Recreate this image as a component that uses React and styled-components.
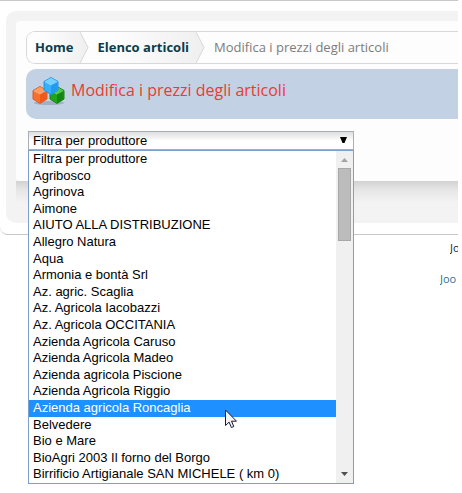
import React, { useState } from "react";
import styled, { createGlobalStyle } from "styled-components";

const GlobalStyle = createGlobalStyle`
  * { box-sizing: border-box; }
  body { margin: 0; background: #fff; font-family: "Open Sans", sans-serif; }
`;

const Page = styled.div`
  padding-right: 4px;
  min-height: 100vh;
`;

const Frame = styled.main`
  padding: 10px 0 11px 6px;
  border: 1px solid #c8c8c8;
  border-width: 1px 0;
  border-bottom-left-radius: 8px;
`;

const Surround = styled.div`
  padding: 10px 0 0 10px;
  background: #f3f3f3;
  border-radius: 10px 0 0 10px;
`;

const Panel = styled.section`
  padding: 10px 0 31px 10px;
  background: #fdfdfd;
  border-radius: 4px 0 0 4px;
`;

const PanelShade = styled.div`
  height: 42px;
  background: linear-gradient(#d2d2d2, #e6e6e6 9px, #f3f3f3 22px);
`;

const Breadcrumbs = styled.nav`
  display: flex;
  height: 33px;
  border: 1px solid #d8d8d8;
  border-right: 0;
  border-radius: 9px 0 0 9px;
  overflow: hidden;
  font-size: 13px;
  line-height: 31px;
  white-space: nowrap;
`;

const Crumb = styled.a`
  display: flex;
  padding-left: 8px;
  gap: 7px;
  color: #0b3c4c;
  font-weight: 700;
  text-decoration: none;
  background: linear-gradient(90deg, #fdfdfd 20%, #efefef);
`;

const CurrentCrumb = styled.span`
  padding-left: 9px;
  color: #7c7c7c;
`;

const Banner = styled.header`
  display: flex;
  gap: 5px;
  height: 50px;
  margin-top: 5px;
  padding: 8px 6px;
  background: #c3d1e5;
  border-radius: 10px 0 0 10px;
`;

const Title = styled.h1`
  margin: 0;
  font-size: 16px;
  line-height: 26px;
  font-weight: 400;
  color: #f0392f;
`;

const Filter = styled.div`
  position: relative;
  width: 326px;
  margin: 12px 0 0 2px;
  font-family: "Liberation Sans", Arial, sans-serif;
  font-size: 13px;
  color: #000;
`;

const SelectBox = styled.div`
  display: grid;
  align-items: center;
  height: 19px;
  border: 1px solid #a5b0bb;
  background: linear-gradient(#dedede, #fff 9px);
`;

const Select = styled.select`
  grid-area: 1 / 1;
  width: 100%;
  height: 17px;
  padding: 0 4px;
  border: 0;
  outline: 0;
  appearance: none;
  background: transparent;
  color: inherit;
  font: inherit;
`;

const SelectArrow = styled.svg`
  grid-area: 1 / 1;
  justify-self: end;
  margin: 0 6px 2px 0;
  pointer-events: none;
`;

const Menu = styled.div`
  position: absolute;
  z-index: 1;
  top: 100%;
  left: 0;
  width: 100%;
  height: 334px;
  display: grid;
  grid-template-columns: 1fr 17px;
  border: 1px solid #7a9fd0;
  background: #fff;
`;

const Options = styled.ul`
  display: grid;
  grid-template-rows: repeat(20, 1fr);
  margin: 0;
  padding: 0;
  list-style: none;
`;

const Option = styled.li`
  padding-left: 4px;
  line-height: 16px;
  white-space: nowrap;
  background: ${(p) => (p.$active ? "#1e90ff" : "transparent")};
  color: ${(p) => (p.$active ? "#fff" : "#000")};
`;

const Scrollbar = styled.div`
  display: flex;
  flex-direction: column;
  align-items: center;
  background: #f0f0f0;
`;

const Thumb = styled.div`
  width: 13px;
  height: 73px;
  margin-bottom: auto;
  border: 1px solid #a8a8a8;
  background: #bcbcbc;
`;

const Pointer = styled.svg`
  position: absolute;
  z-index: 2;
  left: 197px;
  top: 278px;
  pointer-events: none;
`;

const Footer = styled.footer`
  display: flex;
  flex-direction: column;
  align-items: flex-end;
  gap: 14px;
  padding-top: 4px;
  font-size: 11px;
  line-height: 17px;
`;

const Credit = styled.span`
  width: 8px;
  overflow: hidden;
  color: #252525;
`;

const CreditLink = styled.a`
  width: 18px;
  overflow: hidden;
  color: #2f6f96;
  text-decoration: none;
`;

const producers = [
  "Filtra per produttore",
  "Agribosco",
  "Agrinova",
  "Aimone",
  "AIUTO ALLA DISTRIBUZIONE",
  "Allegro Natura",
  "Aqua",
  "Armonia e bontà Srl",
  "Az. agric. Scaglia",
  "Az. Agricola Iacobazzi",
  "Az. Agricola OCCITANIA",
  "Azienda Agricola Caruso",
  "Azienda Agricola Madeo",
  "Azienda agricola Piscione",
  "Azienda Agricola Riggio",
  "Azienda agricola Roncaglia",
  "Belvedere",
  "Bio e Mare",
  "BioAgri 2003 Il forno del Borgo",
  "Birrificio Artigianale SAN MICHELE ( km 0)",
];

function CrumbLink({ children }) {
  return (
    <Crumb href="#">
      <span>{children}</span>
      <svg width="9" height="31" viewBox="0 0 9 31" aria-hidden="true">
        <path d="M0 0 8 15.5 0 31H9V0Z" fill="#fdfdfd" />
        <path d="M0 0 8 15.5 0 31" fill="none" stroke="#d8d8d8" />
      </svg>
    </Crumb>
  );
}

function Cube({ x, y, top, left, right, edge }) {
  return (
    <g transform={`translate(${x} ${y})`}>
      <path d="M1 4.5 8 .5l7 4v8.5L8 17.5 1 13Z" fill={left} stroke={edge} strokeLinejoin="round" />
      <path d="M1.5 4.5 8 .8 14.5 4.5 8 8Z" fill={top} />
      <path d="M8 8l6.5-3.5V13L8 17Z" fill={right} />
      <path d="M2 5 8 8l6-3" fill="none" stroke="#fff" strokeOpacity=".3" />
    </g>
  );
}

function CubesIcon() {
  return (
    <svg width="34" height="30" viewBox="0 0 34 30" aria-hidden="true">
      <ellipse cx="17" cy="26" rx="15" ry="2" fill="#61708a" opacity=".35" />
      <Cube x={17} y={9} top="#50c943" left="#20a51c" right="#118910" edge="#168318" />
      <Cube x={0} y={9} top="#ff9b65" left="#fb6f2c" right="#ef581b" edge="#d85b28" />
      <Cube x={11} y={0} top="#78d0ff" left="#36b0fd" right="#219bf2" edge="#2094e6" />
    </svg>
  );
}

export default function App() {
  const [value, setValue] = useState(producers[0]);
  const [active, setActive] = useState(15);
  return (
    <>
      <GlobalStyle />
      <Page>
        <Frame>
          <Surround>
            <Panel>
              <Breadcrumbs aria-label="Breadcrumb">
                <CrumbLink>Home</CrumbLink>
                <CrumbLink>Elenco articoli</CrumbLink>
                <CurrentCrumb>Modifica i prezzi degli articoli</CurrentCrumb>
              </Breadcrumbs>
              <Banner>
                <CubesIcon />
                <Title>Modifica i prezzi degli articoli</Title>
              </Banner>
              <Filter>
                <SelectBox>
                  <Select
                    aria-label="Filtra per produttore"
                    value={value}
                    onChange={(e) => setValue(e.target.value)}
                  >
                    {producers.map((name) => (
                      <option key={name}>{name}</option>
                    ))}
                  </Select>
                  <SelectArrow width="7" height="6" viewBox="0 0 7 6" aria-hidden="true">
                    <path d="M0 0h7L4.5 6h-2Z" />
                  </SelectArrow>
                </SelectBox>
                <Menu>
                  <Options role="listbox" aria-label="Filtra per produttore">
                    {producers.map((name, i) => (
                      <Option
                        key={name}
                        role="option"
                        aria-selected={i === active}
                        $active={i === active}
                        onMouseEnter={() => setActive(i)}
                        onClick={() => setValue(name)}
                      >
                        {name}
                      </Option>
                    ))}
                  </Options>
                  <Scrollbar aria-hidden="true">
                    <svg width="17" height="17" viewBox="0 0 17 17">
                      <path d="M5 11 8.5 7 12 11Z" fill="#a3a3a3" />
                    </svg>
                    <Thumb />
                    <svg width="17" height="17" viewBox="0 0 17 17">
                      <path d="M5 6 8.5 10 12 6Z" fill="#505050" />
                    </svg>
                  </Scrollbar>
                </Menu>
                <Pointer width="12" height="20" viewBox="0 0 12 20" aria-hidden="true">
                  <path
                    d="M.5 1v15.5l3.6-3.4 2.3 5.4 2.4-1-2.3-5.3h5Z"
                    fill="#f4f4f6"
                    stroke="#15183a"
                  />
                </Pointer>
              </Filter>
            </Panel>
            <PanelShade />
          </Surround>
        </Frame>
        <Footer>
          <Credit>Jo</Credit>
          <CreditLink href="#">Joo</CreditLink>
        </Footer>
      </Page>
    </>
  );
}
